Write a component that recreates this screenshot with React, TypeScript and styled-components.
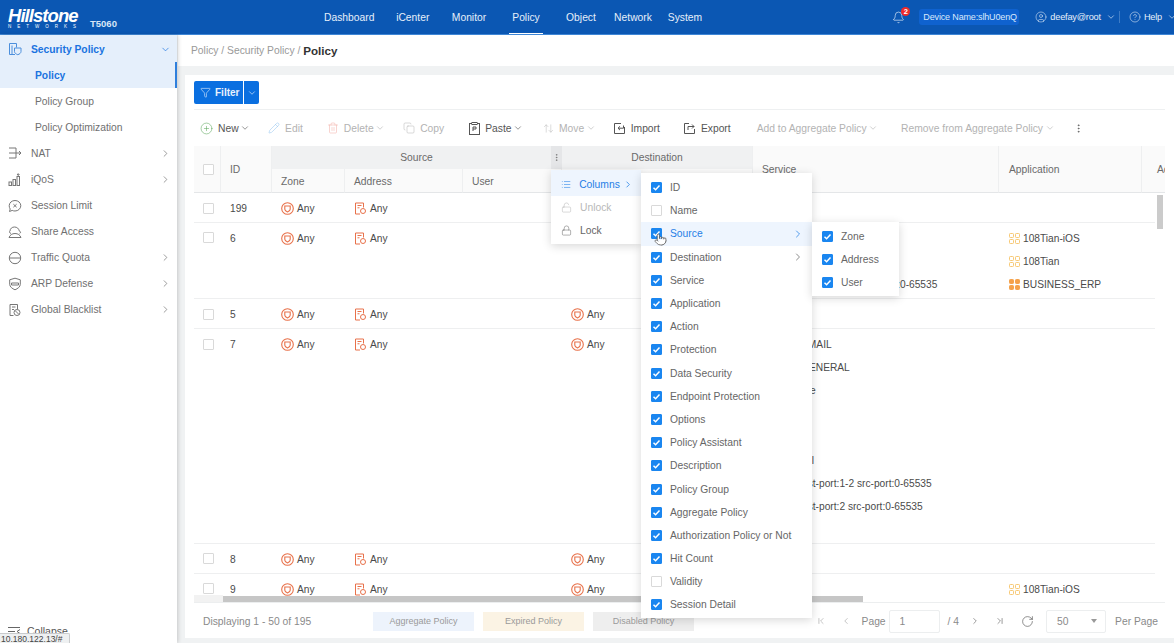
import React from 'react';
import styled, { createGlobalStyle } from 'styled-components';
import {
  ArrowUpDown,
  Bell,
  ChevronDown,
  ChevronFirst,
  ChevronLast,
  ChevronLeft,
  ChevronRight,
  CirclePlus,
  CircleHelp,
  CircleUser,
  Copy,
  EllipsisVertical,
  Filter,
  List,
  Lock,
  LockOpen,
  Pencil,
  Pointer,
  RotateCw,
  Trash2,
} from 'lucide-react';

const GlobalStyle = createGlobalStyle`
  html, body {
    margin: 0;
    height: 100%;
    overflow: hidden;
    background: #f0f2f3;
    font-family: "Liberation Sans", Arial, sans-serif;
    font-size: 11px;
    color: #555;
  }
  * { box-sizing: border-box; }
`;

const COLS = '27px 51px 73px 118px 99px 191px 246px 143px 80px';

/* small drawn icons */
const ZoneIcon = () => (
  <svg width="13" height="13" viewBox="0 0 13 13" fill="none" stroke="#e8714a" strokeWidth="1.1">
    <circle cx="6.5" cy="6.5" r="5.8" />
    <path d="M3.800 4h5.400v3.300c0 1.300-1.300 2-2.700 2.600C5.100 9.300 3.800 8.600 3.800 7.300z" />
  </svg>
);

const AddressIcon = () => (
  <svg width="13" height="13" viewBox="0 0 13 13" fill="none" stroke="#e8714a" strokeWidth="1">
    <path d="M6 12H1.500V1h8v4.500" />
    <path d="M3.500 3.500h4M3.500 5.800h2" />
    <circle cx="9" cy="9" r="2.500" />
  </svg>
);

const AppIcon = ({ $solid }: { $solid?: boolean }) => (
  <svg width="11" height="11" viewBox="0 0 11 11" fill={$solid ? '#f5a14a' : 'none'} stroke={$solid ? '#f5a14a' : '#f7c873'} strokeWidth="1">
    <rect x="0.500" y="0.500" width="4" height="4" rx="0.8" />
    <rect x="6.500" y="0.500" width="4" height="4" rx="0.8" />
    <rect x="0.500" y="6.500" width="4" height="4" rx="0.8" />
    <rect x="6.500" y="6.500" width="4" height="4" rx="0.8" />
  </svg>
);

const ServiceIcon = () => (
  <svg width="14" height="13" viewBox="0 0 14 13" fill="none" stroke="#7fb2e8" strokeWidth="1">
    <rect x="1" y="1" width="11" height="11" rx="1.500" />
  </svg>
);

const ImportIcon = () => (
  <svg width="13" height="13" viewBox="0 0 13 13" fill="none" stroke="#555" strokeWidth="1">
    <path d="M8 1.500H1.500v10h10V5" />
    <path d="M10.500 3.500v2.700H5M7 4.300 5 6.200l2 1.900" />
  </svg>
);

const ExportIcon = () => (
  <svg width="13" height="13" viewBox="0 0 13 13" fill="none" stroke="#555" strokeWidth="1">
    <path d="M6 1.500H1.500v10h10V7" />
    <path d="M5 8V4.500h6M9 2.500l2 2-2 2" />
  </svg>
);

const PasteIcon = () => (
  <svg width="11" height="13" viewBox="0 0 11 13" fill="none" stroke="#555" strokeWidth="1">
    <rect x="0.500" y="1.500" width="10" height="11" />
    <rect x="3" y="0.500" width="5" height="2" fill="#fff" />
    <path d="M4 9V5h3v2H4" />
  </svg>
);

const PolicyIcon = () => (
  <svg width="14" height="14" viewBox="0 0 14 14" fill="none" stroke="#4c8fdc" strokeWidth="1">
    <path d="M7 12.500H1.500v-11h7v4" />
    <path d="M4 3.500v9" />
    <path d="M6.500 6h6.500v3.500c0 1.600-1.500 2.600-3.200 3.200-1.700-.6-3.300-1.600-3.300-3.200z" />
  </svg>
);

const NatIcon = () => (
  <svg width="14" height="14" viewBox="0 0 14 14" fill="none" stroke="#777" strokeWidth="1">
    <path d="M1 2h7M1 7h12M1 12h7M8 2v10M11 5l2 2-2 2" />
  </svg>
);

const QosIcon = () => (
  <svg width="14" height="14" viewBox="0 0 14 14" fill="none" stroke="#777" strokeWidth="1">
    <rect x="1" y="9" width="2.500" height="3.500" />
    <rect x="5" y="6.500" width="2.500" height="6" />
    <rect x="9" y="3.500" width="2.500" height="9" />
    <path d="M10.200 3V.8M9 2l1.200-1.300L11.500 2" />
  </svg>
);

const SessionIcon = () => (
  <svg width="14" height="14" viewBox="0 0 14 14" fill="none" stroke="#777" strokeWidth="1">
    <path d="M7 1.500c3.200 0 5.800 2.300 5.800 5.200S10.200 12 7 12c-1 0-2-.2-2.800-.6L1.500 12.500l.7-2.500C1.500 9 1.200 8 1.200 6.700 1.200 3.800 3.800 1.500 7 1.500z" />
    <path d="M5.400 5.200l3.200 3M8.600 5.200l-3.200 3" />
  </svg>
);

const ShareIcon = () => (
  <svg width="14" height="14" viewBox="0 0 14 14" fill="none" stroke="#777" strokeWidth="1">
    <path d="M3 8.500C1.500 8 1 6.800 2 6c.2-2.500 2-4 4.500-4C9 2 10.800 3.600 11.200 5.800c1.600.6 1.700 2.200.4 2.800" />
    <path d="M1 12.500c1-2.500 3-4 6-4s5 1.500 6 4z" />
  </svg>
);

const TrafficIcon = () => (
  <svg width="14" height="14" viewBox="0 0 14 14" fill="none" stroke="#777" strokeWidth="1">
    <circle cx="7" cy="7" r="5.700" />
    <path d="M1.500 7h11" />
  </svg>
);

const ArpIcon = () => (
  <svg width="14" height="14" viewBox="0 0 14 14" fill="none" stroke="#777" strokeWidth="1">
    <path d="M7 1.200l5.300 1.600v4.500c0 2.500-2.500 4.300-5.300 5.500-2.800-1.200-5.300-3-5.300-5.500V2.800z" />
    <path d="M3.500 6h7v2h-7z" />
  </svg>
);

const BlacklistIcon = () => (
  <svg width="14" height="14" viewBox="0 0 14 14" fill="none" stroke="#777" strokeWidth="1">
    <path d="M5.500 12.500H2v-11h7.500v4.500" />
    <path d="M4 4h3.500M4 6.500h2" />
    <circle cx="9" cy="9.500" r="3" />
    <path d="M7 7.500l4 4" />
  </svg>
);

const CollapseIcon = () => (
  <svg width="13" height="11" viewBox="0 0 13 11" fill="none" stroke="#666" strokeWidth="1">
    <path d="M0 1.500h12M0 5.500h7M0 9.500h12M12 3.500l-3 2 3 2" />
  </svg>
);

/* header */
const TopBar = styled.header`
  display: flex;
  align-items: center;
  flex: 0 0 35px;
  height: 35px;
  background: #0b57b3;
  border-bottom: 1px solid #3e86d6;
  color: #e6effa;
  font-size: 10.3px;
  overflow: hidden;
`;

const Brand = styled.div`
  display: flex;
  flex-direction: column;
  margin: 2px 0 0 8px;
  width: 82px;
  color: #fff;
`;

const BrandName = styled.span`
  font-size: 18.500px;
  line-height: 17px;
  font-weight: 700;
  font-style: italic;
  letter-spacing: -0.95px;
`;

const BrandSub = styled.span`
  font-size: 4.500px;
  line-height: 5px;
  letter-spacing: 6px;
  white-space: nowrap;
`;

const Model = styled.span`
  margin-top: 12px;
  width: 223px;
  color: #d8e6f7;
  font-size: 9.500px;
  font-weight: 700;
`;

const TopNav = styled.nav`
  display: flex;
  align-self: stretch;
`;

const TopLink = styled.a<{ $w: number; $gap?: number; $active?: boolean }>`
  display: flex;
  align-items: center;
  justify-content: center;
  width: ${(p) => p.$w}px;
  margin-left: ${(p) => p.$gap ?? 0}px;
  margin-bottom: -1px;
  border-bottom: 2px solid ${(p) => (p.$active ? '#ffffff' : 'transparent')};
  padding-top: 1px;
`;

const TopRight = styled.div`
  display: flex;
  align-items: center;
  margin: 0 -3px 0 auto;
  font-size: 9.200px;
  white-space: nowrap;
`;

const BellWrap = styled.div`
  position: relative;
  display: flex;
  margin-right: 14px;
`;

const Badge = styled.span`
  position: absolute;
  top: -4px;
  right: -5px;
  width: 9px;
  height: 9px;
  border-radius: 50%;
  background: #ee2b2b;
  color: #fff;
  font-size: 7.500px;
  line-height: 9px;
  font-weight: 700;
  text-align: center;
`;

const DeviceChip = styled.span`
  padding: 2px 4px;
  width: 100px;
  height: 16px;
  border-radius: 3px;
  background: #0f62cf;
  color: #d9e9fb;
  font-size: 9px;
  line-height: 12px;
  letter-spacing: -0.15px;
`;

const TopAction = styled.span`
  display: flex;
  align-items: center;
  gap: 3px;
  margin-left: 16px;
  letter-spacing: -0.2px;
`;

const TopChevron = styled(ChevronDown)`
  margin-left: 2px;
`;

const TopSep = styled.span`
  width: 1px;
  height: 12px;
  margin: 0 -7px 0 3px;
  background: #3e7cc6;
`;

/* page frame */
const Page = styled.div`
  display: flex;
  flex-direction: column;
  height: 643px;
  overflow: hidden;
`;

const Body = styled.div`
  display: flex;
  flex: 1;
  min-height: 0;
`;

const Sidebar = styled.aside`
  display: flex;
  flex-direction: column;
  position: relative;
  flex: 0 0 177px;
  background: #fff;
  box-shadow: 1px 0 4px rgba(0, 0, 0, 0.18);
`;

const SideItem = styled.div<{ $open?: boolean; $sub?: boolean; $active?: boolean }>`
  display: flex;
  align-items: center;
  flex: 0 0 ${(p) => (p.$open ? 27.1 : 26.1)}px;
  padding: ${(p) => (p.$open ? 1 : 0)}px 6px 0 ${(p) => (p.$sub ? 35 : 8)}px;
  gap: 9px;
  background: ${(p) => (p.$open || p.$active ? '#e5effb' : 'transparent')};
  color: ${(p) => (p.$open || p.$active ? '#1a73e0' : '#707070')};
  font-weight: ${(p) => (p.$open || p.$active ? 700 : 400)};
  font-size: 10.300px;
  border-right: ${(p) => (p.$active ? '2px solid #2f7fdc' : '0')};
`;

const SideLabel = styled.span`
  flex: 1;
`;

const SideFoot = styled.div`
  display: flex;
  align-items: center;
  gap: 6px;
  margin-top: auto;
  padding: 0 8px 0 8px;
  height: 12px;
  margin-bottom: 6px;
  color: #555;
  font-size: 10.500px;
`;

const UrlTip = styled.div`
  position: absolute;
  left: 0;
  bottom: 0;
  width: 70px;
  height: 10px;
  background: #eef0f1;
  border: 1px solid #c9cbcd;
  border-left: 0;
  border-bottom: 0;
  border-radius: 0 2px 0 0;
  color: #444;
  font-size: 8.500px;
  line-height: 10px;
  padding-left: 1px;
  white-space: nowrap;
`;

const Main = styled.main`
  display: flex;
  flex-direction: column;
  flex: 1;
  min-width: 0;
  padding-left: 1px;
`;

const Crumbs = styled.div`
  display: flex;
  align-items: center;
  gap: 3px;
  flex: 0 0 31px;
  padding: 0 0 1px 13px;
  background: #fff;
  color: #999;
  font-size: 10.300px;
`;

const CrumbNow = styled.strong`
  color: #333;
  font-size: 11.600px;
`;

const Card = styled.section`
  position: relative;
  display: flex;
  flex-direction: column;
  flex: 0 0 563px;
  margin: 9px 0 0 7px;
  padding: 6px 9px 0 9px;
  background: #fff;
`;

const FilterRow = styled.div`
  display: flex;
  height: 29px;
  border-bottom: 1px solid #eef0f1;
`;

const FilterBtn = styled.button`
  display: flex;
  align-items: center;
  gap: 4px;
  width: 49px;
  height: 23px;
  border: 0;
  padding: 0 0 0 6px;
  background: #0a6fe0;
  color: #e8f2fd;
  font: 700 10px "Liberation Sans", Arial, sans-serif;
  border-radius: 2px 0 0 2px;
`;

const FilterCaret = styled(FilterBtn)`
  justify-content: center;
  width: 15px;
  margin-left: 1px;
  padding: 0;
  border-radius: 0 2px 2px 0;
`;

const Toolbar = styled.div`
  display: flex;
  align-items: center;
  gap: 21px;
  height: 36px;
  padding-left: 6px;
`;

const Tool = styled.span<{ $off?: boolean; $nudge?: number }>`
  display: flex;
  align-items: center;
  gap: 5px;
  margin-left: ${(p) => p.$nudge ?? 0}px;
  color: ${(p) => (p.$off ? '#b3b3b3' : '#555')};
  font-size: 10.300px;
  white-space: nowrap;
`;

const Chev = styled(ChevronDown).attrs({ size: 10, strokeWidth: 1.5 })`
  margin-left: -3.500px;
`;

const MoreDots = styled(EllipsisVertical)`
  margin-left: -3px;
`;

const Table = styled.div`
  position: relative;
  overflow: hidden;
  height: 457px;
  border-bottom: 1px solid #eceeef;
`;

const HeadGrid = styled.div`
  display: grid;
  grid-template-columns: ${COLS};
  grid-template-rows: 23px 24px;
  color: #6a6a6a;
  font-size: 10.300px;
`;

const HeadCell = styled.div<{ $col: string; $row: string; $group?: boolean; $center?: boolean; $left?: number }>`
  grid-column: ${(p) => p.$col};
  grid-row: ${(p) => p.$row};
  display: flex;
  align-items: center;
  justify-content: ${(p) => (p.$center ? 'center' : 'flex-start')};
  padding: ${(p) => (p.$group ? '0 0 1px 0' : `${p.$row === '2' ? '1px' : '0'} 0 0 ${p.$left ?? 9}px`)};
  background: ${(p) => (p.$group ? '#f0f1f2' : '#fafafa')};
  border-right: 1px solid #eeeff0;
  border-bottom: ${(p) => (p.$group ? '0' : '1px solid #e4e6e8')};
  overflow: hidden;
  white-space: nowrap;
`;

const MenuDots = styled.div`
  grid-column: 5;
  grid-row: 1;
  justify-self: end;
  display: flex;
  align-items: center;
  justify-content: center;
  width: 11px;
  background: #e5e6e8;
  color: #666;
`;

const Rows = styled.div`
  margin-right: 10px;
  overflow: hidden;
`;

const Row = styled.div`
  display: grid;
  grid-template-columns: ${COLS};
  border-bottom: 1px solid #eeeff0;
  color: #4a4a4a;
  font-size: 10.200px;
`;

const Cell = styled.div<{ $left?: number }>`
  padding: 4px 0 1.900px ${(p) => p.$left ?? 9}px;
  min-width: 0;
  white-space: nowrap;
`;

const CellLine = styled.div`
  display: flex;
  align-items: center;
  gap: 3px;
  height: 23.100px;
`;

const Box = styled.span<{ $on?: boolean }>`
  display: inline-flex;
  align-items: center;
  justify-content: center;
  flex: none;
  width: 11px;
  height: 11px;
  border-radius: 1px;
  border: 1px solid ${(p) => (p.$on ? '#1a86f0' : '#d9d9d9')};
  background: ${(p) => (p.$on ? '#1a86f0' : '#fff')};
`;

const CheckCell = styled.div`
  display: flex;
  align-items: flex-start;
  padding: 9.500px 0 0 9px;
`;

const VBar = styled.div`
  position: absolute;
  top: 49px;
  right: 2px;
  width: 6px;
  height: 34px;
  background: #cbcbcb;
`;

const HTrack = styled.div`
  position: absolute;
  left: 0;
  bottom: 0;
  width: 29px;
  height: 7px;
  background: #f2f2f2;
`;

const HBar = styled.div`
  position: absolute;
  left: 29px;
  bottom: 0;
  width: 640px;
  height: 6px;
  background: #c6c6c6;
`;

const Foot = styled.footer`
  display: flex;
  align-items: center;
  height: 34px;
  padding-top: 2px;
  color: #8a8a8a;
  font-size: 10.300px;
`;

const Count = styled.span`
  width: 179px;
  padding-left: 9px;
`;

const Legend = styled.span<{ $bg: string }>`
  display: flex;
  align-items: center;
  justify-content: center;
  width: 101px;
  height: 19px;
  margin-right: 9px;
  background: ${(p) => p.$bg};
  color: #9a9a9a;
  font-size: 9px;
`;

const Pager = styled.div`
  display: flex;
  align-items: center;
  margin-left: auto;
  padding-right: 7px;
  color: #8a8a8a;
`;

const PagerInput = styled.span`
  display: flex;
  align-items: center;
  width: 51px;
  height: 23px;
  margin: 0 8px 0 3px;
  padding-left: 10px;
  border: 1px solid #eceeef;
  border-radius: 2px;
`;

const PagerSelect = styled(PagerInput)`
  justify-content: space-between;
  width: 60px;
  margin: 0 9px 0 0;
  padding-right: 8px;
`;

const Caret = styled.span`
  width: 0;
  height: 0;
  border-left: 3.500px solid transparent;
  border-right: 3.500px solid transparent;
  border-top: 4px solid #999;
`;

const PagerBtn = styled.span<{ $w: number }>`
  display: flex;
  justify-content: center;
  width: ${(p) => p.$w}px;
`;

/* popup menus */
const Popup = styled.div<{ $left: number; $top: number; $w: number; $padTop?: number; $padBottom?: number }>`
  position: absolute;
  left: ${(p) => p.$left}px;
  top: ${(p) => p.$top}px;
  width: ${(p) => p.$w}px;
  padding: ${(p) => p.$padTop ?? 0}px 0 ${(p) => p.$padBottom ?? 0}px;
  background: #fff;
  box-shadow: 0 2px 9px rgba(0, 0, 0, 0.16);
  color: #707070;
  font-size: 10.300px;
`;

const MenuItem = styled.div<{ $active?: boolean; $off?: boolean; $tall?: boolean }>`
  display: flex;
  align-items: center;
  gap: 8px;
  height: ${(p) => (p.$tall ? 26 : 23.2)}px;
  padding: ${(p) => (p.$tall ? '3px' : '0')} 8px 0 10px;
  background: ${(p) => (p.$active ? '#eef5fe' : 'transparent')};
  color: ${(p) => (p.$active ? '#1f7ee6' : p.$off ? '#b8b8b8' : '#666')};
  white-space: nowrap;
`;

const ItemLabel = styled.span`
  flex: 1;
`;

const ColumnsArrow = styled(ChevronRight)`
  margin-left: -5px;
`;

const HandCursor = styled.span`
  position: absolute;
  left: 13px;
  top: 60px;
  display: flex;
`;

const Tick = () => (
  <svg width="9" height="9" viewBox="0 0 9 9" fill="none" stroke="#fff" strokeWidth="1.500">
    <path d="M1.500 4.700 3.600 6.700 7.500 2.500" />
  </svg>
);

const columnItems = [
  { name: 'ID', on: true },
  { name: 'Name', on: false },
  { name: 'Source', on: true, sub: true, active: true },
  { name: 'Destination', on: true, sub: true },
  { name: 'Service', on: true },
  { name: 'Application', on: true },
  { name: 'Action', on: true },
  { name: 'Protection', on: true },
  { name: 'Data Security', on: true },
  { name: 'Endpoint Protection', on: true },
  { name: 'Options', on: true },
  { name: 'Policy Assistant', on: true },
  { name: 'Description', on: true },
  { name: 'Policy Group', on: true },
  { name: 'Aggregate Policy', on: true },
  { name: 'Authorization Policy or Not', on: true },
  { name: 'Hit Count', on: true },
  { name: 'Validity', on: false },
  { name: 'Session Detail', on: true },
];

type AppRef = { name: string; solid?: boolean };
type Policy = { id: string; dest?: boolean; service: string[]; apps: AppRef[] };

const policies: Policy[] = [
  { id: '199', service: [''], apps: [] },
  {
    id: '6',
    service: ['', '', 'TCP dst-port:1-25 src-port:0-65535'],
    apps: [{ name: '108Tian-iOS' }, { name: '108Tian' }, { name: 'BUSINESS_ERP', solid: true }],
  },
  { id: '5', dest: true, service: [''], apps: [] },
  {
    id: '7',
    dest: true,
    service: [
      'WEB_MAIL',
      'SIP_GENERAL',
      'Website',
      '',
      '',
      'Firewall',
      'TCP dst-port:1-2 src-port:0-65535',
      'TCP dst-port:2 src-port:0-65535',
      '',
    ],
    apps: [],
  },
  { id: '8', dest: true, service: [''], apps: [] },
  { id: '9', dest: true, service: [''], apps: [{ name: '108Tian-iOS' }] },
];

const sideItems = [
  { name: 'NAT', icon: <NatIcon />, more: true },
  { name: 'iQoS', icon: <QosIcon />, more: true },
  { name: 'Session Limit', icon: <SessionIcon /> },
  { name: 'Share Access', icon: <ShareIcon /> },
  { name: 'Traffic Quota', icon: <TrafficIcon />, more: true },
  { name: 'ARP Defense', icon: <ArpIcon />, more: true },
  { name: 'Global Blacklist', icon: <BlacklistIcon />, more: true },
];

const navItems = [
  { name: 'Dashboard', w: 72.5 },
  { name: 'iCenter', w: 54.5 },
  { name: 'Monitor', w: 58 },
  { name: 'Policy', w: 34, gap: 11 },
  { name: 'Object', w: 52, gap: 12 },
  { name: 'Network', w: 52 },
  { name: 'System', w: 52 },
];

export default function App() {
  return (
    <Page>
      <GlobalStyle />
      <TopBar>
        <Brand>
          <BrandName>Hillstone</BrandName>
          <BrandSub>NETWORKS</BrandSub>
        </Brand>
        <Model>T5060</Model>
        <TopNav>
          {navItems.map((n) => (
            <TopLink key={n.name} $w={n.w} $gap={n.gap} $active={n.name === 'Policy'}>
              {n.name}
            </TopLink>
          ))}
        </TopNav>
        <TopRight>
          <BellWrap>
            <Bell size={13} strokeWidth={1.2} />
            <Badge>2</Badge>
          </BellWrap>
          <DeviceChip>Device Name:slhU0enQ</DeviceChip>
          <TopAction>
            <CircleUser size={12} strokeWidth={1.1} />
            deefay@root
            <TopChevron size={10} strokeWidth={1.5} />
          </TopAction>
          <TopSep />
          <TopAction>
            <CircleHelp size={12} strokeWidth={1.1} />
            Help
            <TopChevron size={10} strokeWidth={1.5} />
          </TopAction>
        </TopRight>
      </TopBar>
      <Body>
        <Sidebar>
          <SideItem $open>
            <PolicyIcon />
            <SideLabel>Security Policy</SideLabel>
            <ChevronDown size={11} strokeWidth={1.5} />
          </SideItem>
          <SideItem $sub $active>Policy</SideItem>
          <SideItem $sub>Policy Group</SideItem>
          <SideItem $sub>Policy Optimization</SideItem>
          {sideItems.map((s) => (
            <SideItem key={s.name}>
              {s.icon}
              <SideLabel>{s.name}</SideLabel>
              {s.more && <ChevronRight size={11} strokeWidth={1.5} />}
            </SideItem>
          ))}
          <SideFoot>
            <CollapseIcon />
            Collapse
          </SideFoot>
          <UrlTip>10.180.122.13/#</UrlTip>
        </Sidebar>
        <Main>
          <Crumbs>
            Policy / Security Policy / <CrumbNow>Policy</CrumbNow>
          </Crumbs>
          <Card>
            <FilterRow>
              <FilterBtn>
                <Filter size={11} strokeWidth={1.3} />
                Filter
              </FilterBtn>
              <FilterCaret>
                <ChevronDown size={10} strokeWidth={1.5} />
              </FilterCaret>
            </FilterRow>
            <Toolbar>
              <Tool>
                <CirclePlus size={13} strokeWidth={1} color="#5aa55a" />
                New <Chev />
              </Tool>
              <Tool $off $nudge={-3}>
                <Pencil size={12} strokeWidth={1} color="#8cc0ee" />
                Edit
              </Tool>
              <Tool $off $nudge={3}>
                <Trash2 size={12} strokeWidth={1} color="#f0a9a0" />
                Delete <Chev />
              </Tool>
              <Tool $off $nudge={-3}>
                <Copy size={12} strokeWidth={1} />
                Copy
              </Tool>
              <Tool $nudge={4}>
                <PasteIcon />
                Paste <Chev />
              </Tool>
              <Tool $off $nudge={-1}>
                <ArrowUpDown size={11} strokeWidth={1} />
                Move <Chev />
              </Tool>
              <Tool $nudge={-4}>
                <ImportIcon />
                Import
              </Tool>
              <Tool $nudge={2}>
                <ExportIcon />
                Export
              </Tool>
              <Tool $off $nudge={5}>
                Add to Aggregate Policy <Chev />
              </Tool>
              <Tool $off $nudge={2}>
                Remove from Aggregate Policy <Chev />
              </Tool>
              <MoreDots size={11} strokeWidth={1.6} color="#555" />
            </Toolbar>
            <Table>
              <HeadGrid>
                <HeadCell $col="1" $row="1 / 3">
                  <Box />
                </HeadCell>
                <HeadCell $col="2" $row="1 / 3">ID</HeadCell>
                <HeadCell $col="3 / 6" $row="1" $group $center>Source</HeadCell>
                <MenuDots>
                  <EllipsisVertical size={9} strokeWidth={1.6} />
                </MenuDots>
                <HeadCell $col="3" $row="2">Zone</HeadCell>
                <HeadCell $col="4" $row="2">Address</HeadCell>
                <HeadCell $col="5" $row="2">User</HeadCell>
                <HeadCell $col="6" $row="1" $group $center>Destination</HeadCell>
                <HeadCell $col="6" $row="2">Zone</HeadCell>
                <HeadCell $col="7" $row="1 / 3">Service</HeadCell>
                <HeadCell $col="8" $row="1 / 3" $left={10}>Application</HeadCell>
                <HeadCell $col="9" $row="1 / 3" $left={15}>Action</HeadCell>
              </HeadGrid>
              <Rows>
                {policies.map((p) => (
                  <Row key={p.id}>
                    <CheckCell>
                      <Box />
                    </CheckCell>
                    <Cell><CellLine>{p.id}</CellLine></Cell>
                    <Cell><CellLine><ZoneIcon />Any</CellLine></Cell>
                    <Cell><CellLine><AddressIcon />Any</CellLine></Cell>
                    <Cell />
                    <Cell>
                      {p.dest && <CellLine><ZoneIcon />Any</CellLine>}
                    </Cell>
                    <Cell>
                      {p.service.map((line, i) => (
                        <CellLine key={i}>
                          {line && <ServiceIcon />}
                          {line}
                        </CellLine>
                      ))}
                    </Cell>
                    <Cell $left={10}>
                      {p.apps.map((a) => (
                        <CellLine key={a.name}>
                          <AppIcon $solid={a.solid} />
                          {a.name}
                        </CellLine>
                      ))}
                    </Cell>
                    <Cell />
                  </Row>
                ))}
              </Rows>
              <VBar />
              <HTrack />
              <HBar />
            </Table>
            <Foot>
              <Count>Displaying 1 - 50 of 195</Count>
              <Legend $bg="#edf3fc">Aggregate Policy</Legend>
              <Legend $bg="#fbf3e4">Expired Policy</Legend>
              <Legend $bg="#eeeeee">Disabled Policy</Legend>
              <Pager>
                <PagerBtn $w={18}><ChevronFirst size={10} strokeWidth={1.2} /></PagerBtn>
                <PagerBtn $w={32}><ChevronLeft size={10} strokeWidth={1.2} /></PagerBtn>
                Page
                <PagerInput>1</PagerInput>
                / 4
                <PagerBtn $w={32}><ChevronRight size={10} strokeWidth={1.4} color="#555" /></PagerBtn>
                <PagerBtn $w={18}><ChevronLast size={10} strokeWidth={1.4} color="#555" /></PagerBtn>
                <PagerBtn $w={37}><RotateCw size={13} strokeWidth={1.2} color="#555" /></PagerBtn>
                <PagerSelect>
                  50
                  <Caret />
                </PagerSelect>
                Per Page
              </Pager>
            </Foot>

            <Popup $left={366} $top={95} $w={90} $padBottom={2}>
              <MenuItem $active $tall>
                <List size={11} strokeWidth={1.3} />
                Columns <ColumnsArrow size={11} strokeWidth={1.8} />
              </MenuItem>
              <MenuItem $off>
                <LockOpen size={11} strokeWidth={1.1} />
                Unlock
              </MenuItem>
              <MenuItem>
                <Lock size={11} strokeWidth={1.1} />
                Lock
              </MenuItem>
            </Popup>

            <Popup $left={456} $top={98} $w={171} $padTop={3} $padBottom={1.4}>
              {columnItems.map((c) => (
                <MenuItem key={c.name} $active={c.active}>
                  <Box $on={c.on}>{c.on && <Tick />}</Box>
                  <ItemLabel>{c.name}</ItemLabel>
                  {c.sub && <ChevronRight size={12} strokeWidth={1.5} />}
                </MenuItem>
              ))}
              <HandCursor>
                <Pointer size={13} strokeWidth={1.3} fill="#fff" color="#444" />
              </HandCursor>
            </Popup>

            <Popup $left={627} $top={147} $w={87} $padTop={3} $padBottom={1.4}>
              {['Zone', 'Address', 'User'].map((n) => (
                <MenuItem key={n}>
                  <Box $on><Tick /></Box>
                  {n}
                </MenuItem>
              ))}
            </Popup>
          </Card>
        </Main>
      </Body>
    </Page>
  );
}
